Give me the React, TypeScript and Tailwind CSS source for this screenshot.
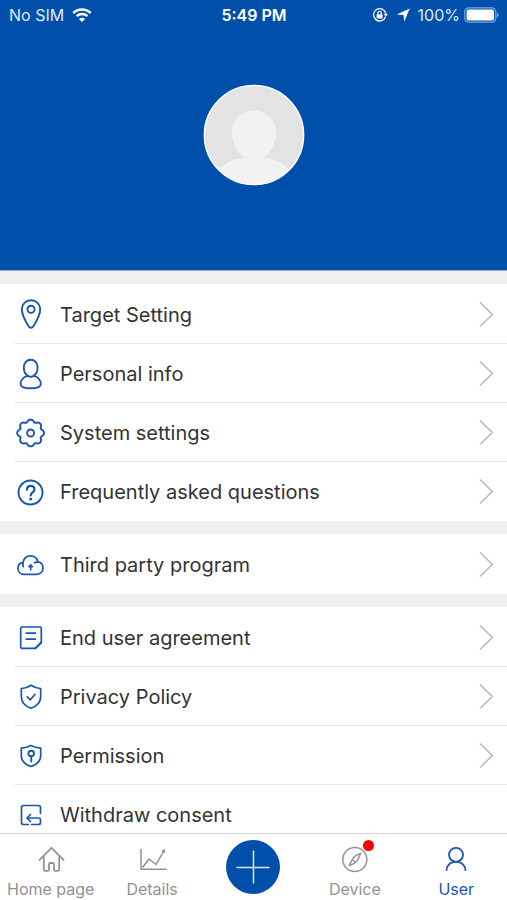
import React from "react";

interface MenuItem {
  label: string;
  icon: React.ReactNode;
  arrow?: boolean;
}

// Outline of the gear: a circle with eight soft teeth
const gearPath =
  Array.from({ length: 96 }, (_, i) => {
    const angle = (i / 96) * Math.PI * 2;
    const radius = 12.4 + 1.2 * Math.cos(angle * 8) - 0.2 * Math.cos(angle * 16);
    const x = 14.6 + radius * Math.sin(angle);
    const y = 16 - radius * Math.cos(angle);
    return `${i === 0 ? "M" : "L"}${x.toFixed(2)} ${y.toFixed(2)}`;
  }).join("") + "Z";

const MenuIcon: React.FC<{ children: React.ReactNode }> = ({ children }) => (
  <svg
    viewBox="0 0 30 32"
    className="h-8 w-[30px] shrink-0"
    fill="none"
    stroke="#1b55b2"
    strokeWidth="1.9"
    strokeLinecap="round"
    strokeLinejoin="round"
    aria-hidden="true"
  >
    {children}
  </svg>
);

const groups: MenuItem[][] = [
  [
    {
      label: "Target Setting",
      arrow: true,
      icon: (
        <MenuIcon>
          <path d="M15 1.3c-5.400 0-9.200 3.900-9.200 9 0 5 3.500 11.700 6.600 16.800 1.500 2.400 3.700 2.400 5.200 0 3.100-5.100 6.600-11.800 6.600-16.800 0-5.100-3.800-9-9.200-9Z" />
          <circle cx="15" cy="10.300" r="3.600" />
        </MenuIcon>
      ),
    },
    {
      label: "Personal info",
      arrow: true,
      icon: (
        <MenuIcon>
          <path d="M11.600 17.700C9 16 7.800 13 7.800 9.500c0-4.500 2.900-7.700 6.900-7.700s6.900 3.200 6.900 7.700c0 3.500-1.200 6.500-3.800 8.200" />
          <path d="M11.600 17.700c-4 1.500-7 4.800-7 8.300 0 3 4 4.300 10.100 4.300s10.100-1.300 10.100-4.300c0-3.500-3-6.800-7-8.300-1.800 1.300-4.400 1.300-6.200 0Z" />
        </MenuIcon>
      ),
    },
    {
      label: "System settings",
      arrow: true,
      icon: (
        <MenuIcon>
          <path d={gearPath} />
          <circle cx="14.600" cy="16" r="3.500" />
        </MenuIcon>
      ),
    },
    {
      label: "Frequently asked questions",
      arrow: true,
      icon: (
        <MenuIcon>
          <circle cx="14.500" cy="16.500" r="12" />
          <path
            d="M11 13.700c0-2.300 1.500-3.800 3.700-3.800s3.700 1.400 3.700 3.500c0 3-3.700 3-3.700 6.100"
            strokeWidth="2.200"
          />
          <circle cx="14.700" cy="23" r="1.500" fill="#1b55b2" stroke="none" />
        </MenuIcon>
      ),
    },
  ],
  [
    {
      label: "Third party program",
      arrow: true,
      icon: (
        <MenuIcon>
          <path
            d="M8.500 25.300c-4 0-6.500-2.700-6.500-6.100 0-3.300 2.100-5.400 5.100-5.800C7.800 9.400 10.800 6.800 14.500 6.800s6.500 2.500 7.400 6c3.100.400 5.100 3 5.100 6.200 0 3.600-2.500 6.300-6.300 6.300ZM7.100 13.400c-.300 1.500-.200 3 .100 4.300M21.900 12.800c-1.200 0-2.300.300-3.300 1"
            strokeWidth="1.700"
          />
          <path d="M14.700 21v-5" strokeWidth="1.600" />
          <path d="m12.500 17.700 2.200-2.400 2.200 2.400Z" fill="#1b55b2" strokeWidth="1" />
        </MenuIcon>
      ),
    },
  ],
  [
    {
      label: "End user agreement",
      arrow: true,
      icon: (
        <MenuIcon>
          <path
            d="M6 5h18c.800 0 1.300.500 1.300 1.300V20.500l-6 5.800H6c-.800 0-1.300-.500-1.300-1.300V6.300c0-.800.500-1.300 1.300-1.300ZM10.300 11.200h9M10.300 17.200h9"
            strokeWidth="1.700"
          />
          <path d="m19.300 26.300 6-5.800" />
        </MenuIcon>
      ),
    },
    {
      label: "Privacy Policy",
      arrow: true,
      icon: (
        <MenuIcon>
          <path
            d="M15 4.300c2.800 2 6 2.900 9.700 3.300v8c0 5.500-3.500 9.500-9.700 11.700-6.200-2.200-9.700-6.200-9.700-11.700v-8C9 7.200 12.200 6.300 15 4.300ZM11.300 15.800l3 3 4.800-5.500"
            strokeWidth="1.700"
          />
        </MenuIcon>
      ),
    },
    {
      label: "Permission",
      arrow: true,
      icon: (
        <MenuIcon>
          <path
            d="M15 5.500c2.800 1.600 6 2.300 9.700 2.600v7.500c0 4.900-3.500 8.800-9.700 10.900-6.200-2.100-9.700-6-9.700-10.900V8.100C9 7.800 12.200 7.100 15 5.500Z"
            strokeWidth="1.700"
          />
          <circle cx="15.200" cy="13.500" r="2.800" />
          <path d="M15.200 16.500v5" />
        </MenuIcon>
      ),
    },
    {
      label: "Withdraw consent",
      icon: (
        <MenuIcon>
          <path
            d="M24.500 14.300V8.500c0-1.300-.700-2-2-2h-15c-1.300 0-2 .700-2 2v15c0 1.300.700 2 2 2h4.700M15.500 25.500h7c1.300 0 2-.700 2-2V21c0-1.300-.700-2-2-2H11.500"
            strokeWidth="1.700"
          />
          <path d="m14.500 15.500-3.500 3.500 3.500 3.500" strokeWidth="1.700" />
        </MenuIcon>
      ),
    },
  ],
];

const StatusBar: React.FC = () => (
  <div className="grid grid-cols-[1fr_auto_1fr] items-center pl-[9px] pr-2 pt-[3px] text-base leading-6 text-[#dfeaf8]">
    <div className="flex items-center gap-2">
      <span>No SIM</span>
      <svg viewBox="0 0 20 15" className="h-[15px] w-5" fill="none" stroke="#fff" aria-hidden="true">
        <path d="M1.300 5c4.900-4.700 12.500-4.700 17.400 0" strokeWidth="2.500" />
        <path d="M4.600 8.200c3.100-2.900 7.700-2.900 10.800 0" strokeWidth="2.400" />
        <path d="M10 14 6.900 10.900c1.900-1.600 4.300-1.600 6.200 0Z" fill="#fff" stroke="none" />
      </svg>
    </div>
    <span className="font-semibold text-white">5:49 PM</span>
    <div className="flex items-center justify-end">
      <svg viewBox="0 0 16 16" className="mr-2 size-4" fill="none" stroke="#fff" aria-hidden="true">
        <path d="M13.600 9.800A6.200 6.200 0 1 1 13.800 6.500" strokeWidth="1.300" />
        <path d="M11.700 6.800h4.200l-2.100 3Z" fill="#fff" stroke="none" />
        <rect x="4.600" y="7.200" width="6" height="4.300" rx=".6" fill="#fff" stroke="none" />
        <path d="M5.900 7.500V6a1.700 1.700 0 0 1 3.400 0v1.500" strokeWidth="1.200" />
      </svg>
      <svg viewBox="0 0 14 14" className="mr-2 size-3.5" fill="#fff" aria-hidden="true">
        <path d="M13.700.5 8.200 13.700 7.500 7.100.7 6.400Z" />
      </svg>
      <span className="mr-1">100%</span>
      <svg viewBox="0 0 35 16" className="h-4 w-[35px]" aria-hidden="true">
        <rect x=".8" y=".8" width="31" height="14.400" rx="4" fill="none" stroke="#7fa8da" strokeWidth="1.200" />
        <rect x="2.600" y="2.600" width="27.400" height="10.800" rx="2" fill="#fff" />
        <path d="M33 5.500c2 .8 2 4.200 0 5Z" fill="#7fa8da" />
      </svg>
    </div>
  </div>
);

const Avatar: React.FC = () => (
  <svg viewBox="0 0 102 102" className="size-[102px]" role="img" aria-label="Profile picture">
    <defs>
      <clipPath id="avatar">
        <circle cx="51" cy="51" r="50" />
      </clipPath>
    </defs>
    <circle cx="51" cy="51" r="50" fill="#e3e3e3" />
    <g clipPath="url(#avatar)" fill="#f2f2f2">
      <path d="M51 26.500c-12.500 0-22 9-22 22 0 11 5.500 20.500 12.500 25 5.500 3.500 13.500 3.500 19 0 7-4.500 12.500-14 12.500-25 0-13-9.500-22-22-22Z" />
      <path d="M10 92c9-12 19-17 33-18.500h16C73 75 83 80 92 92v10H10Z" />
    </g>
    <circle cx="51" cy="51" r="49.600" fill="none" stroke="#f8fbff" strokeWidth="1.500" />
  </svg>
);

const MenuRow: React.FC<{ item: MenuItem; last: boolean }> = ({ item, last }) => (
  <li className="pl-3.5">
    <button
      type="button"
      className={`flex h-[59px] w-full items-center pl-0.5 pr-[13px] pt-0.5 text-left ${
        last ? "" : "shadow-[0_1px_0_#e9e9e9]"
      }`}
    >
      {item.icon}
      <span className="ml-3.5 flex-1 text-xl text-[#333]">{item.label}</span>
      {item.arrow && (
        <svg viewBox="0 0 16 26" className="h-[26px] w-4" fill="none" stroke="#bdbdbd" strokeWidth="1.700" aria-hidden="true">
          <path d="m2 .5 12.300 12L2 24.500" />
        </svg>
      )}
    </button>
  </li>
);

const TabButton: React.FC<{ label: string; active?: boolean; badge?: boolean; children: React.ReactNode }> = ({
  label,
  active,
  badge,
  children,
}) => (
  <button
    type="button"
    className={`flex flex-col items-center pt-2.5 text-base leading-6 ${active ? "text-[#1b55b2]" : "text-[#929292]"}`}
  >
    <span className="relative mb-[3px]">
      <svg
        viewBox="0 0 30 30"
        className="size-[30px]"
        fill="none"
        stroke="currentColor"
        strokeWidth="1.800"
        strokeLinejoin="round"
        aria-hidden="true"
      >
        {children}
      </svg>
      {badge && <span className="absolute -right-1 -top-1 size-[11px] rounded-full bg-[#fb0007]" />}
    </span>
    <span className="whitespace-nowrap">{label}</span>
  </button>
);

const App: React.FC = () => {
  return (
    <div className="flex h-screen flex-col bg-[#efefef] font-['Inter','Liberation_Sans',sans-serif]">
      <header className="h-[271px] shrink-0 border-b border-[#8fb1dc] bg-[#0050ab]">
        <StatusBar />
        <div className="mt-[57px] flex justify-center">
          <Avatar />
        </div>
      </header>

      <main className="flex min-h-0 flex-1 flex-col gap-[13px] overflow-y-auto pt-[13px] [scrollbar-width:none]">
        {groups.map((group, index) => (
          <ul key={index} className="shrink-0 bg-white pb-px">
            {group.map((item, i) => (
              <MenuRow key={item.label} item={item} last={i === group.length - 1} />
            ))}
          </ul>
        ))}
      </main>

      <nav className="grid h-[67px] shrink-0 grid-cols-5 border-t border-[#d4d4d4] bg-white">
        <TabButton label="Home page">
          <path d="M3 16.300 15.500 3.800 28 16.300" />
          <path d="M7.800 12.500v13c0 .900.400 1.300 1.300 1.300h2.600c.900 0 1.300-.400 1.300-1.300v-5.200c0-.900.400-1.300 1.300-1.300h2.400c.900 0 1.300.400 1.300 1.300v5.200c0 .900.400 1.300 1.300 1.300h2.600c.900 0 1.300-.400 1.300-1.300v-13" />
        </TabButton>
        <TabButton label="Details">
          <path d="M4 5v20.200h25.500" strokeWidth="1.500" />
          <path d="m5.500 23.500 6.500-8.500 7 5.500L26.500 7.500" strokeWidth="1.500" />
          <path d="M28 4.800 24.300 7.300l3.500 2Z" fill="currentColor" stroke="none" />
        </TabButton>
        <button type="button" aria-label="Add" className="mt-1.5 flex size-[54px] items-center justify-center justify-self-center rounded-full bg-[#0050ab]">
          <svg viewBox="0 0 34 34" className="size-[34px]" stroke="#dce8f7" strokeWidth="1.500" aria-hidden="true">
            <path d="M17.500 .5v33M.5 17.500h33" />
          </svg>
        </button>
        <TabButton label="Device" badge>
          <circle cx="14.800" cy="15.500" r="12" strokeWidth="1.500" />
          <path d="M20.800 9.500c-4.300 1.200-7.200 3.300-8.500 6L9.300 21.500c4.300-1.200 7.200-3.300 8.500-6Z" strokeWidth="1.500" />
          <path d="m12.300 15.500 2.800 2.500" strokeWidth="1.200" />
        </TabButton>
        <TabButton label="User" active>
          <circle cx="15" cy="10.800" r="7" />
          <path d="M5.500 26.800c0-5 3.500-9 9.500-9s9.500 4 9.500 9" />
        </TabButton>
      </nav>
    </div>
  );
};

export default App;
